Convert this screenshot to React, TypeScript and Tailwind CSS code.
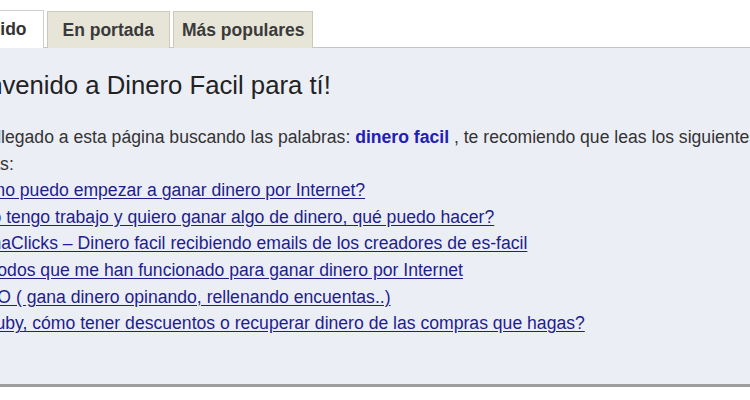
const links = [
  "Cómo puedo empezar a ganar dinero por Internet?",
  "¿No tengo trabajo y quiero ganar algo de dinero, qué puedo hacer?",
  "GanaClicks – Dinero facil recibiendo emails de los creadores de es-facil",
  "Métodos que me han funcionado para ganar dinero por Internet",
  "CIAO ( gana dinero opinando, rellenando encuentas..)",
  "Beruby, cómo tener descuentos o recuperar dinero de las compras que hagas?",
];

export default function App() {
  return (
    <div
      className="w-[750px] h-[400px] overflow-hidden bg-white text-[#333]"
      style={{ fontFamily: '"Liberation Sans", Arial, sans-serif' }}
    >
      <div className="pt-[10px] -ml-[60px] w-[900px]">
        {/* tabs */}
        <div className="-ml-[17px] flex items-end gap-[3px] h-[38px]">
          <div className="h-[38px] px-[16px] flex items-center bg-white border border-b-0 border-[#cfcfcf] text-[17.5px] font-bold text-[#333] relative z-10">
            Contenido
          </div>
          <div className="h-[37px] px-[15px] flex items-center bg-[#e7e5d7] border border-b-0 border-[#cbc9bc] text-[17.5px] font-bold text-[#3a3a3a]">
            En portada
          </div>
          <div className="h-[37px] px-[8px] flex items-center bg-[#e7e5d7] border border-b-0 border-[#cbc9bc] text-[17.5px] font-bold text-[#3a3a3a]">
            Más populares
          </div>
        </div>

        {/* panel */}
        <div className="-mt-px border-t border-[#c4c4c4] border-b-[3px] border-b-[#9d9d9d] bg-[#eceef6] h-[340px]">
          <div className="pl-[21px]">
            <h1 className="pt-[21px] -ml-[10px] text-[25.7px] leading-[32px] text-[#222]">
              Bienvenido a Dinero Facil para tí!
            </h1>
            <p className="mt-[23px] text-[17.6px] leading-[26.6px] w-[800px]">
              Has llegado a esta página buscando las palabras:{" "}
              <b className="text-[#2020b4]">dinero facil</b> , te recomiendo que
              leas los siguientes temas:
            </p>
            <ul className="pl-[7px] text-[17.6px] leading-[26.6px]">
              {links.map((l) => (
                <li key={l}>
                  <a href="#" className="text-[#1e1e8c] underline underline-offset-[2px]">
                    {l}
                  </a>
                </li>
              ))}
            </ul>
          </div>
        </div>
      </div>
    </div>
  );
}
